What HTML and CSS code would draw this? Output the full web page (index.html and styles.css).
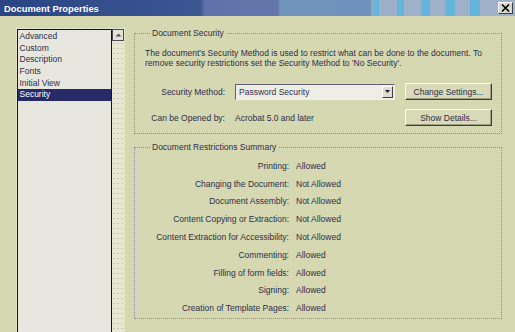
FILE: index.html
```html
<!DOCTYPE html>
<html>
<head>
<meta charset="utf-8">
<link rel="stylesheet" href="styles.css">
</head>
<body>
<div class="window">
  <div class="titlebar">
    <span class="title">Document Properties</span>
    <span class="close">
      <svg width="9" height="8" viewBox="0 0 9 8"><path d="M1 0.5 L8 7.5 M8 0.5 L1 7.5" stroke="#000" stroke-width="1.6"/></svg>
    </span>
  </div>
  <div class="main">
    <div class="listwrap">
      <ul class="list">
        <li>Advanced</li>
        <li>Custom</li>
        <li>Description</li>
        <li>Fonts</li>
        <li>Initial View</li>
        <li class="sel">Security</li>
      </ul>
      <div class="scroll">
        <div class="scroll-btn">
          <svg width="7" height="4" viewBox="0 0 7 4"><path d="M0.5 3.5 L3.5 0.5 L6.5 3.5 Z" fill="#505060"/></svg>
        </div>
        <div class="track"></div>
      </div>
    </div>
    <div class="panel">
      <fieldset class="group g1">
        <legend>Document Security</legend>
        <p class="desc">The document's Security Method is used to restrict what can be done to the document. To<br>remove security restrictions set the Security Method to 'No Security'.</p>
        <div class="row r1">
          <span class="lbl">Security Method:</span>
          <div class="select">
            <span class="sel-text">Password Security</span>
            <span class="sel-arrow"><svg width="5" height="3" viewBox="0 0 5 3"><path d="M0 0 L5 0 L2.5 3 Z" fill="#202030"/></svg></span>
          </div>
          <button class="btn">Change Settings...</button>
        </div>
        <div class="row r2">
          <span class="lbl">Can be Opened by:</span>
          <span class="val">Acrobat 5.0 and later</span>
          <button class="btn">Show Details...</button>
        </div>
      </fieldset>
      <fieldset class="group g2">
        <legend>Document Restrictions Summary</legend>
        <div class="sum">
          <span class="k">Printing:</span><span class="v">Allowed</span>
          <span class="k">Changing the Document:</span><span class="v">Not Allowed</span>
          <span class="k">Document Assembly:</span><span class="v">Not Allowed</span>
          <span class="k">Content Copying or Extraction:</span><span class="v">Not Allowed</span>
          <span class="k">Content Extraction for Accessibility:</span><span class="v">Not Allowed</span>
          <span class="k">Commenting:</span><span class="v">Allowed</span>
          <span class="k">Filling of form fields:</span><span class="v">Allowed</span>
          <span class="k">Signing:</span><span class="v">Allowed</span>
          <span class="k">Creation of Template Pages:</span><span class="v">Allowed</span>
        </div>
      </fieldset>
    </div>
  </div>
</div>
</body>
</html>
```

FILE: styles.css
```css
* { box-sizing: border-box; }
html, body { margin: 0; padding: 0; }
body {
  width: 515px;
  height: 332px;
  overflow: hidden;
  background: #d5d8b1;
  font-family: "Liberation Sans", Arial, sans-serif;
  font-size: 8.5px;
  color: #2e2e4c;
}
.window { width: 515px; height: 332px; display: flex; flex-direction: column; }
.titlebar {
  height: 16px;
  flex: none;
  display: flex;
  align-items: center;
  justify-content: space-between;
  padding: 0 2px 0 4px;
  background:
    linear-gradient(90deg, transparent 0 373px, #62b6dc 373px 379px, transparent 379px 397px, #62b6dc 397px 404px, transparent 404px 421px, #62b6dc 421px 430px, transparent 430px 445px, #62b6dc 445px 455px, transparent 455px 470px, #62b6dc 470px 480px, transparent 480px),
    linear-gradient(90deg, #2a4484 0px, #324d8a 90px, #3c5692 200px, #6172aa 205px, #6375ab 278px, #7093bb 280px, #6e92bb 370px, #9eb0c9 373px, #a0b2ca 515px);
}
.title { color: #fff; font-weight: bold; font-size: 9.4px; letter-spacing: 0; }
.close {
  width: 15px; height: 12px;
  background: #d8d8d0;
  border: 1px solid;
  border-color: #fff #404040 #404040 #fff;
  display: flex; align-items: center; justify-content: center;
}
.main { flex: 1; display: flex; padding: 12px 0 0 16px; min-height: 0; }
.listwrap {
  display: flex;
  border: 1px dotted #eceee0;
  border-bottom: none;
  height: 320px;
  flex: none;
}
.list {
  margin: 0;
  padding: 1px 0 0 0;
  list-style: none;
  width: 95px;
  background: #e7e7df;
  border: 1.5px solid #141418;
  border-bottom: none;
}
.list li { height: 11.7px; line-height: 11.7px; padding-left: 1.5px; white-space: nowrap; }
.list li.sel { background: #272a69; color: #fff; }
.scroll { width: 12px; display: flex; flex-direction: column; }
.scroll-btn {
  height: 12px;
  border: 1px solid #4a4a56;
  background: #e4e4d8;
  display: flex; align-items: center; justify-content: center;
}
.track {
  flex: 1;
  background-color: #e6e8d4;
  background-image: radial-gradient(#c8ccaa 0.6px, transparent 0.8px);
  background-size: 4px 5px;
}
.panel { margin-left: 9px; width: 368px; display: flex; flex-direction: column; }
.group {
  margin: 0;
  border: 1px dotted #8a8c9c;
  padding: 0 8px 0 10px;
  min-width: 0;
}
.group legend {
  margin-left: 5px;
  padding: 0 2px;
  line-height: 10px;
  height: 10px;
  font-size: 8.5px;
}
.g1 { padding-top: 11px; padding-bottom: 7px; }
.desc { margin: 0; line-height: 9.5px; white-space: nowrap; }
.row { display: flex; align-items: center; height: 17px; }
.r1 { margin-top: 15px; }
.r2 { margin-top: 9px; }
.lbl { width: 80px; text-align: right; margin-right: 10px; white-space: nowrap; }
.select {
  width: 160px; height: 16px;
  border: 1px solid;
  border-color: #606070 #f0f0e8 #f0f0e8 #606070;
  background: #eeeee6;
  display: flex; align-items: center; justify-content: space-between;
  padding: 0 1px 0 3px;
}
.sel-arrow {
  width: 11px; height: 12px;
  background: #dcdcd0;
  border: 1px solid;
  border-color: #fff #404048 #404048 #fff;
  display: flex; align-items: center; justify-content: center;
}
.val { width: 160px; white-space: nowrap; }
.btn {
  margin-left: 10px;
  width: 87px; height: 17px;
  padding: 0;
  font: inherit;
  color: inherit;
  background: #d8dab8;
  border: 1px solid;
  border-color: #fafaf0 #3c3c44 #3c3c44 #fafaf0;
  box-shadow: inset -1px -1px 0 #9c9e88;
}
.g2 { margin-top: 8px; padding-top: 5px; padding-bottom: 1px; height: 177px; }
.sum {
  display: grid;
  grid-template-columns: 144px auto;
  column-gap: 7px;
  grid-auto-rows: 17.8px;
  align-items: center;
}
.k { text-align: right; white-space: nowrap; }
.v { white-space: nowrap; }
```
